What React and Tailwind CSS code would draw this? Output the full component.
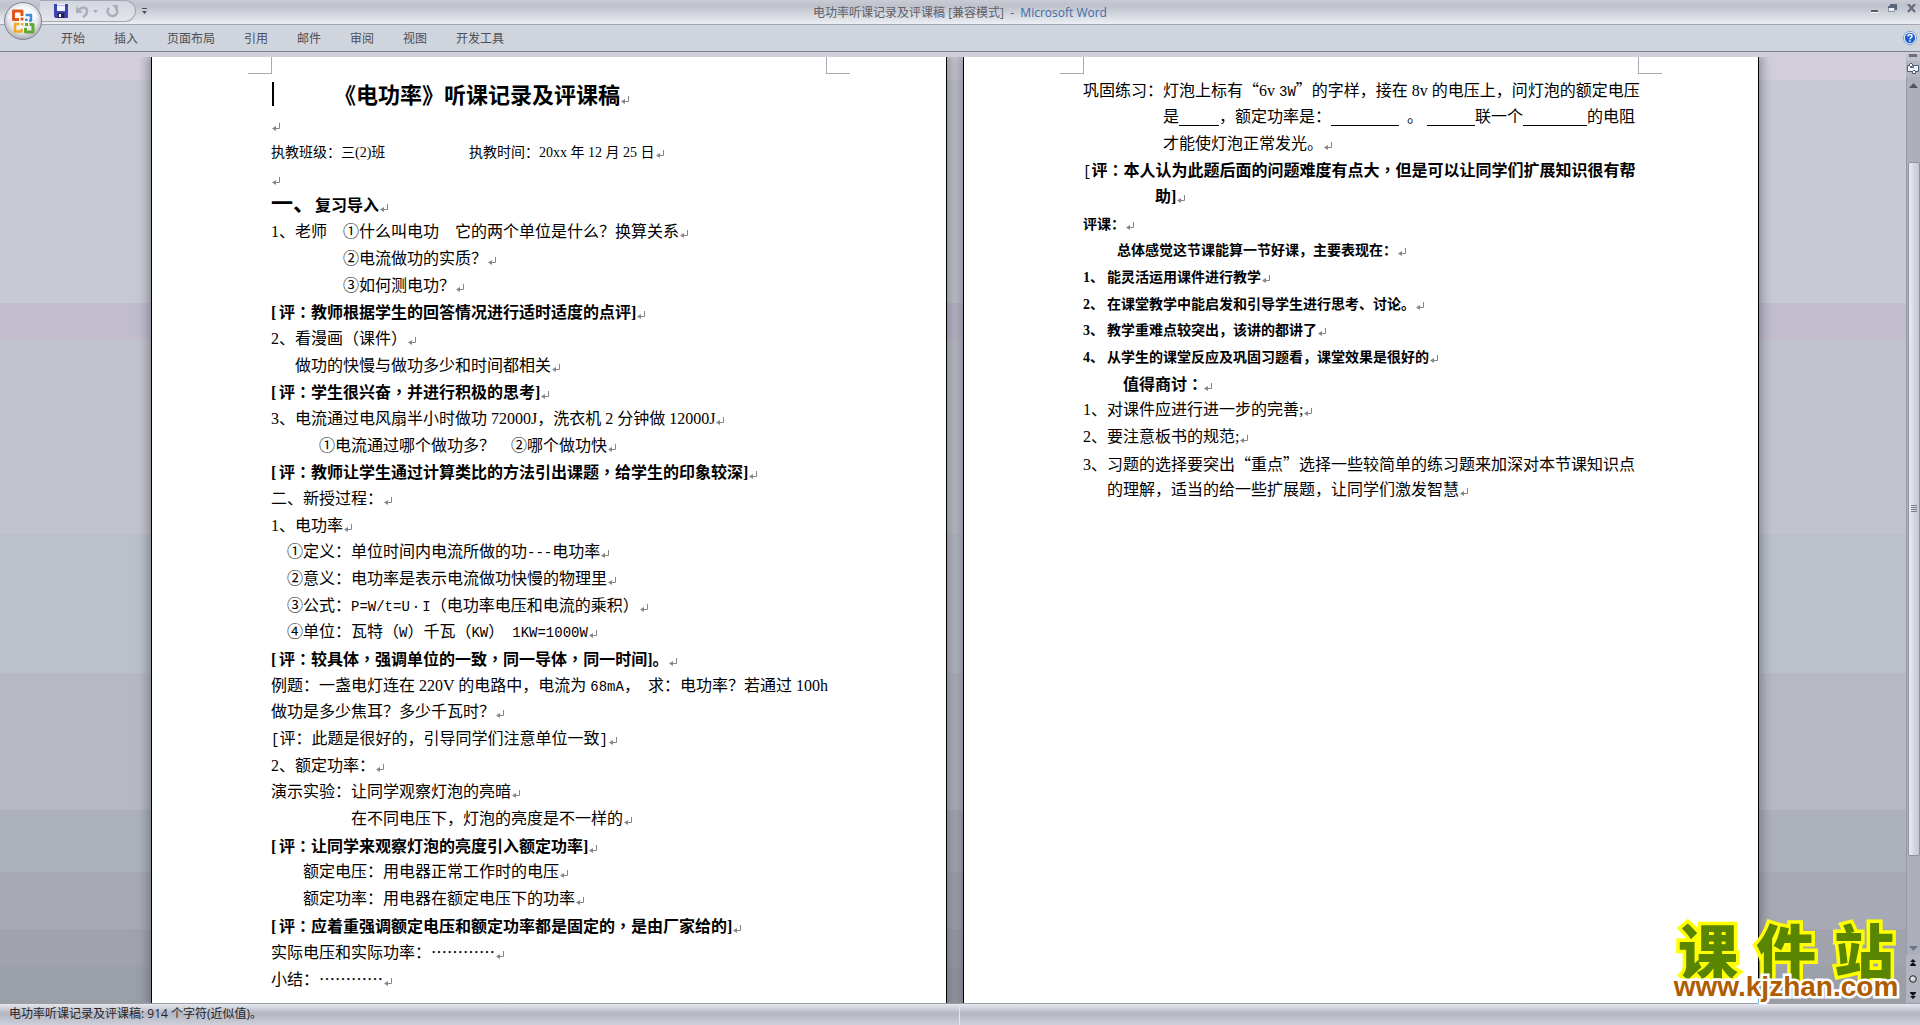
import React from "react";

const TABS = ["开始", "插入", "页面布局", "引用", "邮件", "审阅", "视图", "开发工具"];

function Ret() {
  return (
    <svg className="inline-block ml-px align-[-2px]" width="8" height="9" viewBox="0 0 8 9" aria-hidden="true">
      <path d="M7.5 0v5.5H2" fill="none" stroke="#868686" />
      <path d="M0 5.5 4 3v5z" fill="#868686" />
    </svg>
  );
}

/* Bold comments set their colon and comma in the middle of the cell and the opening bracket in a half cell. */
function Note({ children }) {
  return (
    <b>
      {children.split(/([：，[])/).map((part, i) => {
        if (part === "[") return <span key={i} className="inline-block w-2">[</span>;
        if (part === "：" || part === "，")
          return <span key={i} className="font-['Noto_Sans_CJK_TC']">{part}</span>;
        return part;
      })}
    </b>
  );
}

function Mono({ children }) {
  return <span className="font-['Liberation_Mono'] text-sm leading-none">{children}</span>;
}

function Han({ children }) {
  return <span className="font-['Noto_Sans_CJK_SC']">{children}</span>;
}

function Num({ children }) {
  return <span className="inline-block w-6">{children}、</span>;
}

function Line({ className = "", noRet, children }) {
  return (
    <p className={"h-[27px] leading-[27px] whitespace-pre text-base nth-[3n]:h-[26px] " + className}>
      {children}
      {!noRet && <Ret />}
    </p>
  );
}

function Page({ label, className = "", children }) {
  return (
    <article
      aria-label={label}
      className={
        "w-[796px] shrink-0 flex flex-col bg-white text-black border-x border-black overflow-hidden shadow-[0_0_10px_3px_rgba(70,70,85,0.5)] font-['Liberation_Serif','Noto_Sans_CJK_SC',serif] " +
        className
      }
    >
      <div className="flex justify-between px-24" aria-hidden="true">
        <span className="h-[17px] w-6 border-r border-b border-[#a9a9b4]" />
        <span className="h-[17px] w-6 border-l border-b border-[#a9a9b4]" />
      </div>
      <div className="pl-[119px]">{children}</div>
    </article>
  );
}

function Blank({ className }) {
  return <span className={"inline-block h-[19px] border-b border-black align-[-4px] " + className} />;
}

function Orb() {
  return (
    <svg width="40" height="40" viewBox="0 0 40 40">
      <defs>
        <radialGradient id="orb" cx="50%" cy="40%" r="60%">
          <stop offset="0" stopColor="#ffffff" />
          <stop offset="0.65" stopColor="#e8e9ed" />
          <stop offset="1" stopColor="#a9adb7" />
        </radialGradient>
      </defs>
      <circle cx="20" cy="20" r="18.5" fill="url(#orb)" stroke="#7d828e" />
      <path d="M5 17a15.5 15.5 0 0 1 30 0c-8 4-22 4-30 0z" fill="#fff" opacity="0.6" />
      <g fill="none" strokeLinejoin="round">
        <path d="M16 18.5H10.5V10H19v5" stroke="#e2561b" strokeWidth="3" />
        <path d="M22.5 14H28v5.5h-2" stroke="#3b8fd8" strokeWidth="2.5" />
        <path d="M16.5 23H12v7.5h6.500V28" stroke="#f6a821" strokeWidth="2.5" />
        <path d="M22.5 27v4H30v-7.5h-3.500" stroke="#62a832" strokeWidth="3" />
      </g>
      <path d="M17.5 16.5h3v3h-3z" fill="#e2561b" />
      <path d="M22 17.5h2.500V20H22z" fill="#3b8fd8" />
      <path d="M18 22h2.5v2.500H18z" fill="#f6a821" />
      <path d="M22 22h3v3h-3z" fill="#62a832" />
    </svg>
  );
}

function TitleBar() {
  return (
    <header className="relative flex h-[25px] shrink-0 items-start justify-center border-b border-[#a2a6b2] bg-linear-to-b from-[#c9ccd4] from-0% via-[#bfc2cb] via-25% to-[#eceef5]">
      <div className="absolute left-10 top-0 flex items-center h-[22px]">
        <div className="flex h-[22px] w-24 items-center gap-2 rounded-r-full border border-l-0 border-[#a4a8b3] bg-linear-to-b from-[#d3d6de] to-[#e4e6ec] pl-[14px]">
          <button aria-label="保存" className="block">
            <svg width="14" height="14" viewBox="0 0 14 14">
              <path d="M0 0h14v14H1.5L0 12.5z" fill="#3c44ae" />
              <path d="M3 0h8v7H3z" fill="#f3f5ff" />
              <path d="M3 1h8v1H3z" fill="#aab4ea" />
              <path d="M3.5 9h7v5h-7z" fill="#20255f" />
              <path d="M5 10h2v3H5z" fill="#fff" />
            </svg>
          </button>
          <button aria-label="撤销" className="flex items-center gap-1">
            <svg width="13" height="13" viewBox="0 0 13 13">
              <path d="M3 5c3-4 8-3 8 1 0 3-2 5-4 6" fill="none" stroke="#aaafbc" strokeWidth="2.5" />
              <path d="M0 1v7h7z" fill="#aaafbc" />
            </svg>
            <svg width="5" height="3" viewBox="0 0 5 3"><path d="M0 0h5L2.5 3z" fill="#a4a8b4" /></svg>
          </button>
          <button aria-label="恢复">
            <svg className="block" width="13" height="13" viewBox="0 0 13 13">
              <path d="M3 3C0 6 2 11 6.5 11S13 6 9.5 3" fill="none" stroke="#aaafbc" strokeWidth="2.5" />
              <path d="M6 0h6v6z" fill="#aaafbc" />
            </svg>
          </button>
        </div>
        <button aria-label="自定义快速访问工具栏" className="ml-1.5">
          <svg width="5" height="6" viewBox="0 0 5 6">
            <path d="M0 0h5v1H0zM0 3h5L2.5 6z" fill="#4b4f5c" />
          </svg>
        </button>
      </div>
      <h1 className="text-xs leading-[26px] font-['Open_Sans','Noto_Sans_CJK_SC',sans-serif] text-[#5c6069] whitespace-pre">
        电功率听课记录及评课稿 [兼容模式]  -  <span className="text-[#3a6ca8]">Microsoft Word</span>
      </h1>
      <div className="absolute right-1 top-1 flex items-center gap-2.5">
        <button aria-label="最小化">
          <svg width="7" height="9" viewBox="0 0 7 9"><path d="M0 6h7v2H0z" fill="#5a5a60" /><path d="M0 8h7v1H0z" fill="#fff" /></svg>
        </button>
        <button aria-label="还原">
          <svg width="9" height="9" viewBox="0 0 9 9">
            <path d="M2 0h7v6H7V3H2z" fill="#5c6577" />
            <path d="M.5 3v4.5h6V3" fill="#eef0f5" stroke="#8490a8" />
            <path d="M0 2h7v2H0z" fill="#5c6577" />
          </svg>
        </button>
        <button aria-label="关闭">
          <svg width="9" height="9" viewBox="0 0 9 9"><path d="M1 0l7 8M8 0L1 8" stroke="#626b7d" strokeWidth="2.2" /></svg>
        </button>
      </div>
    </header>
  );
}

function Ribbon() {
  return (
    <nav className="flex h-[27px] shrink-0 items-center border-b border-[#7c818d] bg-[#d0d4dd] pl-[61px] pr-[3px] text-xs text-[#4b4f57] font-['Noto_Sans_CJK_SC',sans-serif]">
      <div className="flex grow gap-[29px]">
        {TABS.map((t) => (
          <button key={t}>{t}</button>
        ))}
      </div>
      <button aria-label="帮助">
        <svg width="14" height="14" viewBox="0 0 14 14">
          <circle cx="7" cy="7" r="6.5" fill="#fff" stroke="#6f9cd4" />
          <circle cx="7" cy="7" r="5.2" fill="#1f5fd0" />
          <path d="M5 5.5c0-2.5 4-2.5 4-.3C9 6.7 7 6.5 7 8.2M7 9.3v1.5" fill="none" stroke="#fff" strokeWidth="1.5" />
        </svg>
      </button>
    </nav>
  );
}

function ScrollBar() {
  return (
    <aside className="flex w-[14px] shrink-0 flex-col items-center bg-[#bfc3cc]">
      <span className="h-[3px] w-2 bg-[#6d6e74]" />
      <button aria-label="标尺" className="mt-1 flex h-4 w-full items-center justify-center bg-[#b4b7c0]">
        <svg width="12" height="12" viewBox="0 0 12 12">
          <path d="M.5 2.5h3v2h3v-2h5v6h-3v2h-3v-2h-5z" fill="#f4f3fa" stroke="#4d5c74" />
          <path d="M4 0l2 2-2 2-2-2zM7 7l2 2-2 2-2-2z" fill="#fff" stroke="#4d5c74" />
        </svg>
      </button>
      <div className="flex w-full grow flex-col items-center border-l border-[#989ba6] bg-[#adb0ba]">
        <button aria-label="向上滚动" className="mt-1.5">
          <svg className="block" width="9" height="5" viewBox="0 0 9 5"><path d="M4.5 0L9 5H0z" fill="#4f5560" /></svg>
        </button>
        <div className="mt-[74px] flex h-[79%] w-3 flex-col items-center justify-center gap-px rounded-xs border border-[#8f949f] bg-linear-to-r from-[#e9ebf0] to-[#c3c7d0]">
          <i className="h-px w-1.5 bg-[#7a7f8b]" />
          <i className="h-px w-1.5 bg-[#7a7f8b]" />
          <i className="h-px w-1.5 bg-[#7a7f8b]" />
          <i className="h-px w-1.5 bg-[#7a7f8b]" />
        </div>
        <button aria-label="向下滚动" className="mt-auto mb-1">
          <svg className="block" width="9" height="5" viewBox="0 0 9 5"><path d="M0 0h9L4.5 5z" fill="#6b7788" /></svg>
        </button>
      </div>
      <div className="flex h-12 w-full flex-col items-center justify-around bg-[#b2b5bf]">
        <button aria-label="前一页">
          <svg className="block" width="6" height="7" viewBox="0 0 6 7"><path d="M3 0l3 3H0zM3 3l3 3H0zM0 6h6v1H0z" fill="#111" /></svg>
        </button>
        <button aria-label="选择浏览对象">
          <svg className="block" width="8" height="8" viewBox="0 0 8 8"><circle cx="4" cy="4" r="3.3" fill="#c9ccd2" stroke="#222" /><circle cx="3" cy="3" r="1" fill="#fff" /></svg>
        </button>
        <button aria-label="下一页">
          <svg className="block" width="6" height="7" viewBox="0 0 6 7"><path d="M0 0h6v1H0zM0 1h6L3 4zM0 4h6L3 7z" fill="#111" /></svg>
        </button>
      </div>
    </aside>
  );
}

function PageOne() {
  return (
    <Page label="第 1 页">
      <h2 className="mt-[3px] flex h-[34px] items-center text-[22px] font-bold whitespace-pre">
        <span className="ml-px h-6 w-0.5 bg-black" />
        <span className="pl-[60px]">
          <Han>《电功率》听课记录及评课稿</Han>
          <Ret />
        </span>
      </h2>
      <p className="h-[27px] leading-[27px]"><Ret /></p>
      <div>
        <Line>
          <span className="inline-block w-[198px] text-sm">执教班级：三(2)班</span>
          <span className="text-sm">执教时间：20xx 年 12 月 25 日</span>
        </Line>
        <Line />
        <Line><b><span className="text-[22px] leading-none">一、</span>复习导入</b></Line>
        <Line><Num>1</Num>老师　①什么叫电功　它的两个单位是什么？换算关系</Line>
        <Line className="pl-[72px]">②电流做功的实质？</Line>
        <Line className="pl-[72px]">③如何测电功？</Line>
        <Line><Note>[评：教师根据学生的回答情况进行适时适度的点评]</Note></Line>
        <Line><Num>2</Num>看漫画（课件）</Line>
        <Line className="pl-6">做功的快慢与做功多少和时间都相关</Line>
        <Line><Note>[评：学生很兴奋，并进行积极的思考]</Note></Line>
        <Line><Num>3</Num>电流通过电风扇半小时做功 72000J，洗衣机 2 分钟做 12000J</Line>
        <Line className="pl-12">①电流通过哪个做功多？　②哪个做功快</Line>
        <Line><Note>[评：教师让学生通过计算类比的方法引出课题，给学生的印象较深]</Note></Line>
        <Line>二、新授过程：</Line>
        <Line><Num>1</Num>电功率</Line>
        <Line className="pl-4">①定义：单位时间内电流所做的功<Mono>---</Mono>电功率</Line>
        <Line className="pl-4">②意义：电功率是表示电流做功快慢的物理里</Line>
        <Line className="pl-4">③公式：<Mono>P=W/t=U<span className="mx-0.5">·</span>I</Mono>（电功率电压和电流的乘积）</Line>
        <Line className="pl-4">④单位：瓦特（<Mono>W</Mono>）千瓦（<Mono>KW</Mono>）　<Mono>1KW=1000W</Mono></Line>
        <Line><Note>[评：较具体，强调单位的一致，同一导体，同一时间]。</Note></Line>
        <Line noRet>例题：一盏电灯连在 220V 的电路中，电流为 <Mono>68mA</Mono>，  求：电功率？若通过 100h</Line>
        <Line>做功是多少焦耳？多少千瓦时？</Line>
        <Line><Mono>[</Mono>评：此题是很好的，引导同学们注意单位一致<Mono>]</Mono></Line>
        <Line><Num>2</Num>额定功率：</Line>
        <Line>演示实验：让同学观察灯泡的亮暗</Line>
        <Line className="pl-20">在不同电压下，灯泡的亮度是不一样的</Line>
        <Line><Note>[评：让同学来观察灯泡的亮度引入额定功率]</Note></Line>
        <Line className="pl-8">额定电压：用电器正常工作时的电压</Line>
        <Line className="pl-8">额定功率：用电器在额定电压下的功率</Line>
        <Line><Note>[评：应着重强调额定电压和额定功率都是固定的，是由厂家给的]</Note></Line>
        <Line>实际电压和实际功率：<Han>…………</Han></Line>
        <Line>小结：<Han>…………</Han></Line>
      </div>
    </Page>
  );
}

function PageTwo() {
  return (
    <Page label="第 2 页">
      <div className="mt-0.5">
        <Line noRet>巩固练习：灯泡上标有<Han>“</Han>6v <Mono>3W</Mono><Han>”</Han>的字样，接在 8v 的电压上，问灯泡的额定电压</Line>
        <Line noRet className="pl-20">
          是<Blank className="w-10" />，额定功率是：<Blank className="w-[68px]" />  。 <Blank className="w-12" />联一个<Blank className="w-16" />的电阻
        </Line>
        <Line className="pl-20">才能使灯泡正常发光。</Line>
        <Line noRet><Mono>[</Mono><Note>评：本人认为此题后面的问题难度有点大，但是可以让同学们扩展知识很有帮</Note></Line>
        <Line className="pl-[72px]"><b>助]</b></Line>
        <Line><b className="text-sm">评课：</b></Line>
        <Line className="pl-[34px]"><b className="text-sm">总体感觉这节课能算一节好课，主要表现在：</b></Line>
        <Line><b className="text-sm"><Num>1</Num>能灵活运用课件进行教学</b></Line>
        <Line><b className="text-sm"><Num>2</Num>在课堂教学中能启发和引导学生进行思考、讨论。</b></Line>
        <Line><b className="text-sm"><Num>3</Num>教学重难点较突出，该讲的都讲了</b></Line>
        <Line><b className="text-sm"><Num>4</Num>从学生的课堂反应及巩固习题看，课堂效果是很好的</b></Line>
        <Line className="pl-10"><Note>值得商讨：</Note></Line>
        <Line><Num>1</Num>对课件应进行进一步的完善;</Line>
        <Line><Num>2</Num>要注意板书的规范;</Line>
        <Line noRet><Num>3</Num>习题的选择要突出<Han>“</Han>重点<Han>”</Han>选择一些较简单的练习题来加深对本节课知识点</Line>
        <Line className="pl-6">的理解，适当的给一些扩展题，让同学们激发智慧</Line>
      </div>
    </Page>
  );
}

function Watermark() {
  return (
    <div className="absolute right-5 bottom-[26px] w-[228px] text-center">
      <div className="flex justify-between px-1.5 font-['Noto_Sans_CJK_SC',sans-serif] text-[60px] leading-[52px] font-black text-[#5a8500] [-webkit-text-stroke:7px_#ffff00] [paint-order:stroke_fill]">
        <span>课</span>
        <span>件</span>
        <span>站</span>
      </div>
      <a
        href="#kjzhan"
        className="relative block text-[28px] leading-6 font-bold text-[#b05c00] font-['Liberation_Sans',sans-serif] [-webkit-text-stroke:5px_#ffffff] [paint-order:stroke_fill]"
      >
        www.kjzhan.com
      </a>
    </div>
  );
}

export default function App() {
  return (
    <div className="relative flex h-screen min-h-[600px] flex-col overflow-hidden bg-[#d2cfda]">
      <TitleBar />
      <Ribbon />
      <button aria-label="Office 按钮" className="absolute left-[3px] top-px z-10"><Orb /></button>
      <div className="flex min-h-0 grow pt-0.5">
        <main className="flex min-w-0 grow justify-center gap-4 overflow-hidden mt-[3px] pl-1 bg-[linear-gradient(to_bottom,#d2cfda_2.4%,#c7cad3_2.4%,#c7cad3_26%,#c1bdcd_26%,#c1bdcd_29.8%,#c2c4cd_29.8%,#c2c4cd_50.4%,#bbc0c9_50.4%,#bbc0c9_65.1%,#b6b9c3_65.1%,#b6b9c3_79.6%,#adb1ba_79.6%,#adb1ba_86.2%,#a7aab4_86.2%,#a7aab4_92.2%,#a0a3ac_92.2%,#a0a3ac_96.2%,#9b9fa8_96.2%)]">
          <PageOne />
          <PageTwo />
        </main>
        <ScrollBar />
      </div>
      <footer className="flex h-[22px] shrink-0 items-center border-t border-[#9a9da6] bg-linear-to-b from-[#e6e8ee] via-[#b4b7c2] via-45% to-[#cdd0d9] text-xs text-[#24262c] font-['Open_Sans','Noto_Sans_CJK_SC',sans-serif]">
        <span className="h-full w-1/2 border-r border-[#e4e6ec] pl-[9px] leading-5">电功率听课记录及评课稿: 914 个字符(近似值)。</span>
      </footer>
      <Watermark />
    </div>
  );
}
